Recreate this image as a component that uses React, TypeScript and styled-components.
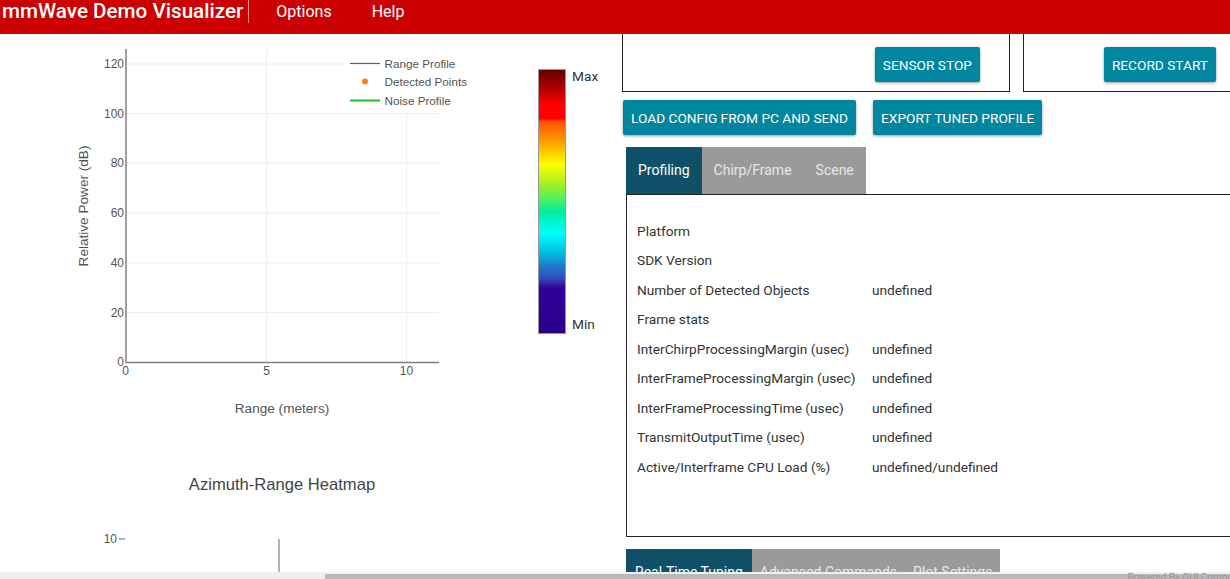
import React from "react";
import styled, { createGlobalStyle } from "styled-components";

const Global = createGlobalStyle`
  html, body { margin: 0; padding: 0; height: 100%; overflow: hidden; background: #fff; }
  #root { height: 100%; }
`;

const Page = styled.div`
  width: 1230px; height: 579px; overflow: hidden; position: relative;
  display: flex; flex-direction: column;
  font-family: Roboto, "Liberation Sans", sans-serif;
`;
const Header = styled.header`
  flex: none; height: 34px; background: #cc0000; color: #fff;
  display: flex; align-items: flex-start; position: relative; z-index: 2;
`;
const Brand = styled.div`
  font-size: 20.65px; font-weight: 500; line-height: 22px; padding: 0 5px 0 2px; height: 23px;
  border-right: 1px solid rgba(255,255,255,.55); white-space: nowrap;
`;
const MenuItem = styled.div`
  font-size: 16px; line-height: 24px; margin-left: 27px; margin-right: 13px; white-space: nowrap;
`;
const Main = styled.div`flex: 1; display: flex; min-height: 0;`;
const Left = styled.section`flex: none; width: 622px;`;
const ChartRow = styled.div`display: flex; align-items: flex-start;`;
const Plot = styled.svg`display: block; flex: none;`;
const ScaleGroup = styled.div`
  display: flex; margin-top: 35px; margin-left: 8px;
`;
const ScaleBar = styled.div`
  width: 26px; height: 263px; border: 1px solid #999;
  background: linear-gradient(to bottom, #660000 0%, #b00000 7%, #ff0000 13%, #ff0000 18.5%, #ff5000 19.5%, #ff9000 26%, #ffc800 31%, #ffff00 36%, #a8f020 43%, #50f060 49%, #00f0a0 54%, #00ffff 62%, #00b8e0 70%, #2080d0 74%, #3050b8 79%, #30009a 83%, #2a0088 100%);
`;
const ScaleLabels = styled.div`
  height: 264px; margin: -1px 0 0 6px; display: flex; flex-direction: column; justify-content: space-between;
  font-size: 13.7px; color: #333; line-height: 16px; box-sizing: border-box;
`;
const HeatTitle = styled.div`
  width: 564px; margin-top: 36px; text-align: center; font: 16.6px "Liberation Sans", sans-serif; color: #444; line-height: 20px;
`;
const Right = styled.section`flex: none; width: 760px; font-size: 13.7px; color: #333;`;
const BoxRow = styled.div`display: flex; gap: 13px; margin-top: -2px;`;
const SensorBox = styled.div<{ $w: number; $pad: number }>`
  width: ${p => p.$w}px; height: 60px; box-sizing: border-box; border: 1px solid #222; border-top: 0;
  display: flex; justify-content: flex-end; align-items: flex-start; padding: 15px ${p => p.$pad}px 0 0;
  flex: none;
`;
const Action = styled.button`
  height: 35px; border: 0; border-radius: 2px; background: #00869e; color: #fff; padding: 0 8px;
  font: 400 13.7px Roboto, sans-serif; text-transform: uppercase; white-space: nowrap;
  box-shadow: 0 1px 3px rgba(0,0,0,.4);
`;
const ActionRow = styled.div`display: flex; gap: 17px; margin: 8px 0 0 1px;`;
const Tabs = styled.div<{ $mt: number }>`
  display: inline-flex; margin: ${p => p.$mt}px 0 0 4px; background: #9a9a9b; height: 47px; vertical-align: top;
`;
const TabBlock = styled.div`display: block; line-height: 0;`;
const Tab = styled.div<{ $active?: boolean; $px: number }>`
  padding: 0 ${p => p.$px}px; line-height: 47px; font-size: 14px; font-weight: 400; white-space: nowrap;
  color: ${p => (p.$active ? "#fff" : "#e8e8e8")};
  background: ${p => (p.$active ? "#0e5168" : "transparent")};
`;
const Panel = styled.div`
  width: 720px; height: 343px; margin-left: 4px; box-sizing: border-box; border: 1px solid #222;
  padding: 21px 10px; background: #fff;
`;
const StatRow = styled.div`display: flex; height: 29.5px; align-items: center;`;
const StatName = styled.div`width: 235px; flex: none; white-space: nowrap;`;
const BottomBar = styled.div`
  position: absolute; left: 0; right: 0; bottom: 0; height: 7px; background: #efefef; z-index: 3; overflow: hidden;
  display: flex; justify-content: flex-end;
`;
const Thumb = styled.div`
  position: absolute; left: 325px; right: 0; top: 2px; bottom: 0; background: #b9b9b9;
`;
const Powered = styled.div`
  position: relative; font-size: 10px; line-height: 12px; color: #999; margin-right: -17px; margin-top: 0; white-space: nowrap;
`;

const yTicks: [string, number][] = [["120", 64], ["100", 113.5], ["80", 163], ["60", 213], ["40", 263], ["20", 312.5]];
const xTicks: [string, number][] = [["0", 126], ["5", 266.5], ["10", 406.5]];

function RangeChart() {
  const base = { fontFamily: "'Liberation Sans', sans-serif", fill: "#555" };
  return (
    <Plot width={530} height={405} viewBox="0 0 530 405">
      <g stroke="#eeeeee" strokeWidth={1}>
        {yTicks.map(([t, y]) => <line key={t} x1={127} x2={439} y1={y - 34} y2={y - 34} />)}
        <line x1={266.5} x2={266.5} y1={15} y2={328} />
        <line x1={406.5} x2={406.5} y1={15} y2={328} />
      </g>
      <rect x={345} y={15} width={130} height={64} fill="#fff" />
      <line x1={126} x2={126} y1={15} y2={329} stroke="#808080" strokeWidth={1.5} />
      <line x1={126} x2={439} y1={328.5} y2={328.5} stroke="#808080" strokeWidth={1.5} />
      <g {...base} fontSize={12} textAnchor="end">
        {yTicks.map(([t, y]) => <text key={t} x={124} y={y - 34 + 4}>{t}</text>)}
        <text x={124} y={332}>0</text>
      </g>
      <g {...base} fontSize={12} textAnchor="middle">
        {xTicks.map(([t, x]) => <text key={t} x={x - (t === "0" ? 0.5 : 0)} y={341}>{t}</text>)}
      </g>
      <text {...base} fontSize={13.6} textAnchor="middle" transform="translate(88,172) rotate(-90)">Relative Power (dB)</text>
      <text {...base} fontSize={13.6} textAnchor="middle" x={282} y={379}>Range (meters)</text>
      <line x1={350} x2={380} y1={29.5} y2={29.5} stroke="#7a3fe0" strokeWidth={1.2} />
      <circle cx={365} cy={47.5} r={3} fill="#ff7f0e" />
      <line x1={350} x2={380} y1={66.5} y2={66.5} stroke="#1dbb30" strokeWidth={2} />
      <g {...base} fontSize={11.7}>
        <text x={384.5} y={34}>Range Profile</text>
        <text x={384.5} y={52}>Detected Points</text>
        <text x={384.5} y={71}>Noise Profile</text>
      </g>
    </Plot>
  );
}

function HeatmapStub() {
  return (
    <Plot width={622} height={120} viewBox="0 0 622 120">
      <text x={117} y={48} fontSize={12} textAnchor="end" fontFamily="'Liberation Sans', sans-serif" fill="#555">10</text>
      <line x1={119} x2={125} y1={44} y2={44} stroke="#666" />
      <line x1={279} x2={279} y1={44} y2={120} stroke="#808080" strokeWidth={1.2} />
    </Plot>
  );
}

const stats: [string, string][] = [
  ["Platform", ""],
  ["SDK Version", ""],
  ["Number of Detected Objects", "undefined"],
  ["Frame stats", ""],
  ["InterChirpProcessingMargin (usec)", "undefined"],
  ["InterFrameProcessingMargin (usec)", "undefined"],
  ["InterFrameProcessingTime (usec)", "undefined"],
  ["TransmitOutputTime (usec)", "undefined"],
  ["Active/Interframe CPU Load (%)", "undefined/undefined"],
];

export default function App() {
  return (
    <Page>
      <Global />
      <Header>
        <Brand>mmWave Demo Visualizer</Brand>
        <MenuItem>Options</MenuItem>
        <MenuItem>Help</MenuItem>
      </Header>
      <Main>
        <Left>
          <ChartRow>
            <RangeChart />
            <ScaleGroup>
              <ScaleBar />
              <ScaleLabels><span>Max</span><span>Min</span></ScaleLabels>
            </ScaleGroup>
          </ChartRow>
          <HeatTitle>Azimuth-Range Heatmap</HeatTitle>
          <HeatmapStub />
        </Left>
        <Right>
          <BoxRow>
            <SensorBox $w={388} $pad={29}><Action>Sensor Stop</Action></SensorBox>
            <SensorBox $w={300} $pad={106}><Action>Record Start</Action></SensorBox>
          </BoxRow>
          <ActionRow>
            <Action>Load Config From PC and Send</Action>
            <Action>Export Tuned Profile</Action>
          </ActionRow>
          <TabBlock>
            <Tabs $mt={12}>
              <Tab $active $px={12}>Profiling</Tab>
              <Tab $px={12}>Chirp/Frame</Tab>
              <Tab $px={12}>Scene</Tab>
            </Tabs>
          </TabBlock>
          <Panel>
            {stats.map(([n, v]) => (
              <StatRow key={n}><StatName>{n}</StatName><span>{v}</span></StatRow>
            ))}
          </Panel>
          <TabBlock>
            <Tabs $mt={12}>
              <Tab $active $px={9}>Real-Time Tuning</Tab>
              <Tab $px={8}>Advanced Commands</Tab>
              <Tab $px={8}>Plot Settings</Tab>
            </Tabs>
          </TabBlock>
        </Right>
      </Main>
      <BottomBar>
        <Thumb />
        <Powered>Powered By GUI Composer</Powered>
      </BottomBar>
    </Page>
  );
}
